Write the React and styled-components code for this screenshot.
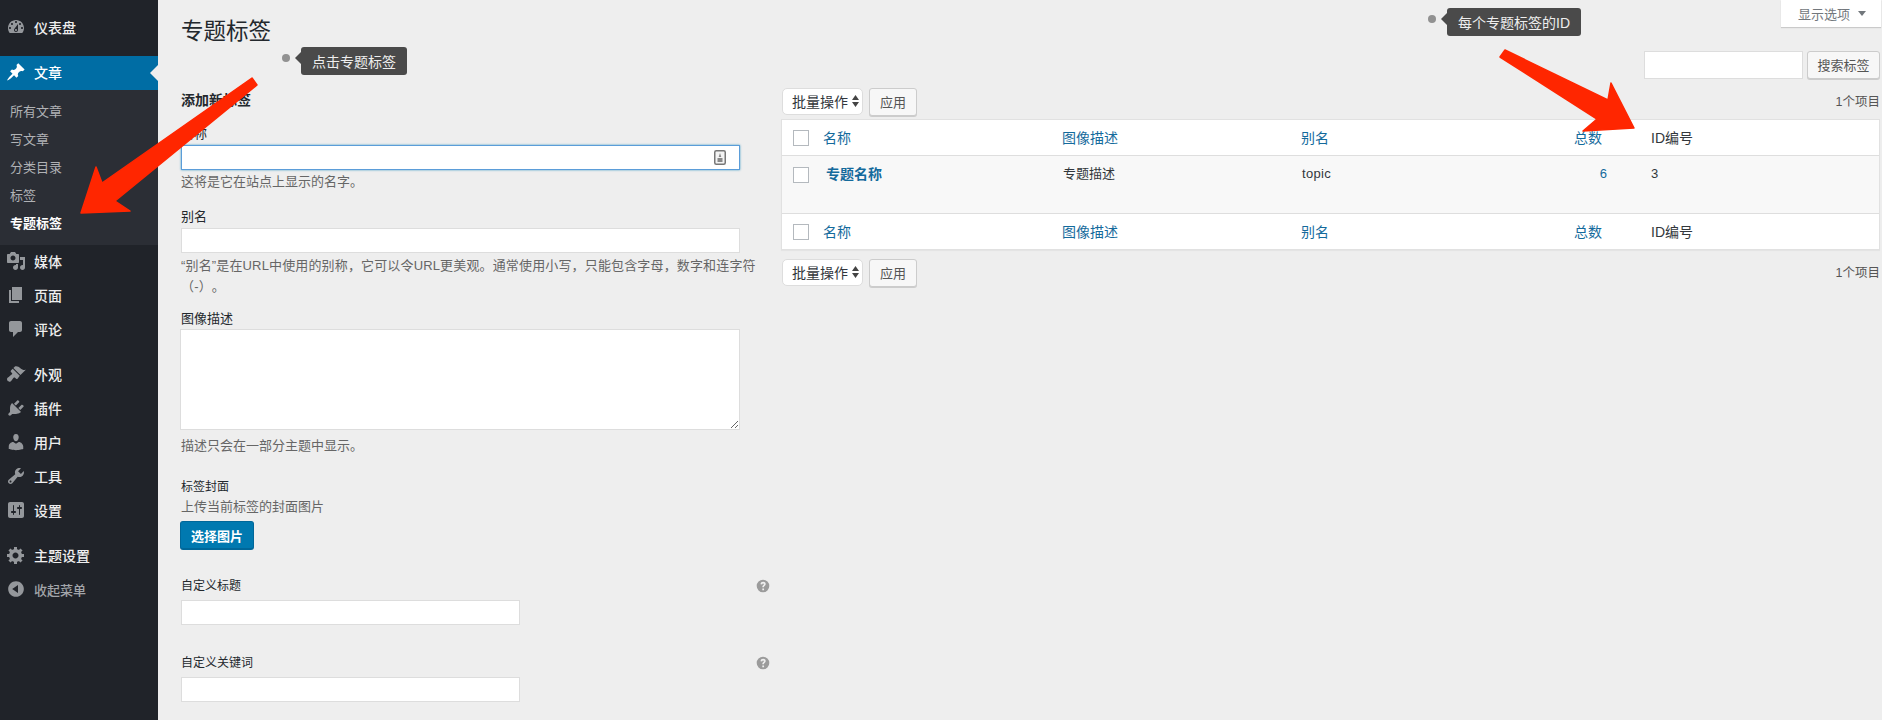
import styled, { createGlobalStyle } from 'styled-components';

const GlobalStyle = createGlobalStyle`
html, body {
  margin: 0;
  height: 720px;
  overflow: hidden;
  background: #eeeeee;
}
body {
  font-family: "Liberation Sans", "Noto Sans CJK SC", sans-serif;
  font-size: 13px;
  color: #32373c;
  text-spacing-trim: space-all;
}
`;

const icons = {
  dashboard: 'M3.76 16h12.48c1.1-1.37 1.76-3.11 1.76-5 0-4.42-3.58-8-8-8s-8 3.58-8 8c0 1.89.66 3.63 1.76 5zM10 4c.55 0 1 .45 1 1s-.45 1-1 1-1-.45-1-1 .45-1 1-1zM6 6c.55 0 1 .45 1 1s-.45 1-1 1-1-.45-1-1 .45-1 1-1zm8 0c.55 0 1 .45 1 1s-.45 1-1 1-1-.45-1-1 .45-1 1-1zm-5.37 5.55L12 7v6c0 1.1-.9 2-2 2s-2-.9-2-2c0-.57.24-1.08.63-1.45zM4 10c.55 0 1 .45 1 1s-.45 1-1 1-1-.45-1-1 .45-1 1-1zm12 0c.55 0 1 .45 1 1s-.45 1-1 1-1-.45-1-1 .45-1 1-1zm-5 3c0-.55-.45-1-1-1s-1 .45-1 1 .45 1 1 1 1-.45 1-1z',
  pin: 'M10.44 3.02l1.82-1.82 6.36 6.35-1.83 1.82c-1.05-.68-2.48-.57-3.41.36l-.75.75c-.92.93-1.04 2.35-.35 3.41l-1.83 1.82-2.41-2.41-2.8 2.79c-.42.42-3.38 2.71-3.8 2.29s1.86-3.39 2.28-3.81l2.79-2.79L4.1 9.36l1.83-1.82c1.05.69 2.48.57 3.4-.36l.75-.75c.93-.92 1.05-2.35.36-3.41z',
  media: 'M13 11V4c0-.55-.45-1-1-1h-1.67L9 1H5L3.67 3H2c-.55 0-1 .45-1 1v7c0 .55.45 1 1 1h10c.55 0 1-.45 1-1zM7 4.5c1.38 0 2.5 1.12 2.5 2.5S8.38 9.5 7 9.5 4.5 8.38 4.5 7 5.62 4.5 7 4.5zM14 6h5v10.5c0 1.38-1.12 2.5-2.5 2.5S14 17.88 14 16.5s1.12-2.5 2.5-2.5c.17 0 .34.02.5.05V9h-3V6zm-4 8.05V13h2v3.5c0 1.38-1.12 2.5-2.5 2.5S7 17.88 7 16.5 8.12 14 9.5 14c.17 0 .34.02.5.05z',
  page: 'M6 15V2h10v13H6zm-1 1h8v2H3V5h2v11z',
  comment: 'M5 2h9c1.1 0 2 .9 2 2v7c0 1.1-.9 2-2 2h-2l-5 5v-5H5c-1.1 0-2-.9-2-2V4c0-1.1.9-2 2-2z',
  brush: 'M14.48 11.06L7.41 3.99l1.5-1.5c.5-.56 2.3-.47 3.51.32 1.21.8 1.43 1.28 2.91 2.1 1.18.64 2.45 1.26 4.45.85zm-.71.71L6.7 4.7 4.93 6.47c-.39.39-.39 1.02 0 1.41l1.06 1.06c.39.39.39 1.03 0 1.42-.6.6-1.43 1.11-2.21 1.69-.35.26-.7.53-1.01.84C1.43 13.23.4 14.55 1.4 16.6c.8 1.6 2.6 1.4 3.7.3.31-.31.58-.66.84-1.01.58-.78 1.09-1.61 1.69-2.21.39-.39 1.03-.39 1.42 0l1.06 1.06c.39.39 1.02.39 1.41 0z',
  plugin: 'M13.11 4.36L9.87 7.6 8 5.73l3.24-3.24c.35-.34 1.05-.2 1.56.32.52.51.66 1.21.31 1.55zm-8 1.77l.91-1.12 9.01 9.01-1.19.84c-.71.71-2.63 1.16-3.82 1.16H6.14L4.9 17.26c-.59.59-1.54.59-2.12 0-.59-.58-.59-1.53 0-2.12l1.24-1.24v-3.88c0-1.13.4-3.19 1.09-3.89zm7.26 3.97l3.24-3.24c.34-.35 1.04-.21 1.55.31.52.51.66 1.21.31 1.55l-3.24 3.25z',
  user: 'M10 9.25c-2.27 0-2.73-3.44-2.73-3.44C7 4.02 7.82 2 9.97 2c2.16 0 2.98 2.02 2.71 3.81 0 0-.41 3.44-2.68 3.44zm0 2.57L12.72 10c2.39 0 4.52 2.33 4.52 4.53v2.49s-3.65 1.13-7.24 1.13c-3.65 0-7.24-1.13-7.24-1.13v-2.49c0-2.25 1.94-4.48 4.47-4.48z',
  tools: 'M16.68 9.77c-1.34 1.34-3.3 1.67-4.95.99l-5.41 6.52c-.99.99-2.59.99-3.58 0s-.99-2.59 0-3.57l6.52-5.42c-.68-1.65-.35-3.61.99-4.95 1.28-1.28 3.12-1.62 4.72-1.06l-2.89 2.89 2.82 2.82 2.86-2.87c.53 1.58.18 3.39-1.08 4.65zM3.81 16.21c.4.39 1.04.39 1.43 0 .4-.4.4-1.04 0-1.43-.39-.4-1.03-.4-1.43 0-.39.39-.39 1.03 0 1.43z',
  settings: 'M18 16V4c0-1.1-.9-2-2-2H4c-1.1 0-2 .9-2 2v12c0 1.1.9 2 2 2h12c1.1 0 2-.9 2-2zM8 11h1c.55 0 1 .45 1 1s-.45 1-1 1H8v1.5c0 .28-.22.5-.5.5s-.5-.22-.5-.5V13H6c-.55 0-1-.45-1-1s.45-1 1-1h1V5.5c0-.28.22-.5.5-.5s.5.22.5.5V11zm5-2h-1c-.55 0-1-.45-1-1s.45-1 1-1h1V5.5c0-.28.22-.5.5-.5s.5.22.5.5V7h1c.55 0 1 .45 1 1s-.45 1-1 1h-1v5.5c0 .28-.22.5-.5.5s-.5-.22-.5-.5V9z',
  gear: 'M18 12h-2.18c-.17.7-.44 1.35-.81 1.93l1.54 1.54-2.1 2.1-1.54-1.54c-.58.36-1.23.63-1.91.79V19H8v-2.18c-.68-.16-1.33-.43-1.91-.79l-1.54 1.54-2.12-2.12 1.54-1.54c-.36-.58-.63-1.23-.79-1.91H1V9.03h2.17c.16-.7.44-1.35.8-1.94L2.43 5.55l2.1-2.1 1.54 1.54c.58-.37 1.24-.64 1.93-.81V2h3v2.18c.68.16 1.33.43 1.91.79l1.54-1.54 2.12 2.12-1.54 1.54c.36.59.64 1.24.8 1.94H18V12zm-8.5 1.5c1.66 0 3-1.34 3-3s-1.34-3-3-3-3 1.34-3 3 1.34 3 3 3z',
  collapse: 'M10 2.16c4.33 0 7.84 3.51 7.84 7.84s-3.51 7.84-7.84 7.84S2.16 14.33 2.16 10 5.71 2.16 10 2.16zm2 11.72V6.12L6.18 9.97z',
};

const subItems = ['所有文章', '写文章', '分类目录', '标签', '专题标签'];

const Page = styled.div`
position: relative;
display: flex;
width: 1882px;
height: 720px;
overflow: hidden;
background: #eeeeee;
`;

const Sidebar = styled.nav`
flex: 0 0 158px;
background: #202329;
padding-top: 11px;
`;

const MenuGroup = styled.div`
margin-bottom: 11px;
`;

const MenuItem = styled.div`
position: relative;
display: flex;
align-items: center;
height: 34px;
box-sizing: border-box;
padding: 0 0 2px 6px;
gap: 8px;
font-size: ${(p) => p.$small ? '13px' : '14px'};
font-weight: 500;
color: ${(p) => p.$active ? '#ffffff' : p.$small ? '#a2a5a9' : '#eeeeee'};
background: ${(p) => p.$active ? '#006da4' : 'transparent'};

svg{
  flex: 0 0 20px;
  width: 20px;
  height: 20px;
  fill: ${(p) => p.$active ? '#ffffff' : '#94979b'};
}

${(p) => p.$active && `
&::after{
  content: "";
  position: absolute;
  right: 0;
  top: 9px;
  border: 8px solid transparent;
  border-right-color: #eeeeee;
  border-left-width: 0;
}
`}
`;

const SubMenu = styled.div`
background: #2b2e35;
padding: 7px 0 8px;
`;

const SubItem = styled.div`
display: flex;
align-items: center;
height: 28px;
box-sizing: border-box;
padding: 0 0 2px 10px;
font-size: 13px;
font-weight: ${(p) => p.$current ? 700 : 400};
color: ${(p) => p.$current ? '#ffffff' : '#b0b2b5'};
`;

const Content = styled.main`
flex: 1;
min-width: 0;
padding: 0 2px 0 23px;
`;

const Header = styled.header`
display: flex;
justify-content: space-between;
height: 88px;
`;

const Title = styled.h1`
margin: 0;
padding-top: 19px;
font-size: 22.5px;
line-height: 26px;
font-weight: 400;
color: #23282d;
`;

const HeaderRight = styled.div`
display: flex;
flex-direction: column;
align-items: flex-end;
`;

const ScreenTab = styled.div`
display: flex;
align-items: center;
width: 100px;
height: 27px;
box-sizing: border-box;
margin: 0 -1px 24px 0;
padding-left: 17px;
background: #ffffff;
box-shadow: 0 1px 1px rgba(0,0,0,0.15);
color: #72777c;
font-size: 13px;

&::after{
  content: "";
  margin-left: 8px;
  border: 4px solid transparent;
  border-top: 5px solid #72777c;
  border-bottom-width: 0;
}
`;

const SearchRow = styled.div`
display: flex;
gap: 4px;
`;

const SearchInput = styled.input`
width: 159px;
height: 28px;
box-sizing: border-box;
border: 1px solid #dddddd;
background: #ffffff;
`;

const Button = styled.button`
width: ${(p) => p.$width}px;
height: 28px;
box-sizing: border-box;
padding: 0 0 2px;
font: inherit;
font-size: 13px;
color: #555555;
background: #f7f7f7;
border: 1px solid #cccccc;
border-radius: 3px;
box-shadow: 0 1px 0 #cccccc;
`;

const Columns = styled.div`
display: flex;
`;

const LeftCol = styled.section`
flex: 0 0 590px;
display: flex;
flex-direction: column;
align-items: flex-start;
margin-right: 10px;
`;

const RightCol = styled.section`
flex: 1;
min-width: 0;
`;

const FormTitle = styled.h2`
margin: 0 0 12px;
font-size: 14px;
line-height: 24px;
font-weight: 700;
color: #23282d;
`;

const Label = styled.div`
font-size: ${(p) => p.$small ? '12px' : '13px'};
line-height: 20px;
margin-top: ${(p) => p.$top || 0}px;
color: #23282d;
`;

const LabelRow = styled.div`
display: flex;
justify-content: space-between;
align-items: center;
width: 100%;
margin-top: ${(p) => p.$top || 0}px;

svg{
  width: 14px;
  height: 14px;
  fill: #9b9b9b;
  margin-right: 1px;
}
`;

const InputWrap = styled.div`
position: relative;
margin-top: ${(p) => p.$top || 0}px;

svg{
  position: absolute;
  right: 14px;
  top: 5px;
  width: 12px;
  height: 15px;
}
`;

const TextInput = styled.input`
display: block;
width: ${(p) => p.$width || 559}px;
height: 25px;
box-sizing: border-box;
background: #ffffff;
border: 1px solid ${(p) => p.$focus ? '#5b9dd9' : '#dddddd'};
${(p) => p.$focus && 'box-shadow: 0 0 2px rgba(30,140,190,.8);'}
`;

const TextArea = styled.textarea`
display: block;
width: 560px;
height: 101px;
margin-left: -1px;
box-sizing: border-box;
background: #ffffff;
border: 1px solid #dddddd;
`;

const Hint = styled.p`
width: 578px;
margin: ${(p) => p.$top ?? 2}px 0 0;
font-size: 13px;
line-height: ${(p) => p.$line || 20}px;
letter-spacing: ${(p) => p.$spread ? '0.15px' : '0'};
color: #666666;
`;

const PrimaryButton = styled.button`
width: 74px;
height: 29px;
margin: 5px 0 0 -1px;
padding: 0;
font: inherit;
font-size: 13px;
font-weight: 700;
color: #ffffff;
background: #0079b0;
border: 1px solid #006799;
border-bottom-width: 2px;
border-radius: 3px;
`;

const TableNav = styled.div`
display: flex;
justify-content: space-between;
align-items: flex-start;
height: 31px;
margin-top: ${(p) => p.$top || 0}px;
`;

const NavLeft = styled.div`
display: flex;
gap: 6px;
margin-left: 1px;
`;

const BulkSelect = styled.div`
display: flex;
align-items: center;
justify-content: space-between;
width: 81px;
height: 27px;
box-sizing: border-box;
padding: 0 3px 2px 9px;
background: #ffffff;
border: 1px solid #dddddd;
border-radius: 5px;
font-size: 14px;
color: #32373c;
white-space: nowrap;

svg{
  width: 7px;
  height: 12px;
  fill: #444444;
}
`;

const ItemCount = styled.div`
font-size: 12.5px;
line-height: 28px;
color: #555555;
`;

const Table = styled.div`
border: 1px solid #e1e1e1;
background: #ffffff;
box-shadow: 0 1px 1px rgba(0,0,0,0.04);
`;

const Row = styled.div`
display: grid;
grid-template-columns: 41px 239px 239px 175px 175px 1fr;
height: ${(p) => p.$height}px;
box-sizing: border-box;
align-items: ${(p) => p.$body ? 'start' : 'center'};
background: ${(p) => p.$body ? '#f8f8f8' : '#ffffff'};
${(p) => p.$line && 'border-bottom: 1px solid #dedede;'}
`;

const CheckCell = styled.div`
padding-left: 11px;
padding-top: ${(p) => p.$top || 0}px;
`;

const Check = styled.span`
display: block;
width: 16px;
height: 16px;
box-sizing: border-box;
background: #ffffff;
border: 1px solid #b4b9be;
`;

const Head = styled.div`
font-size: 14px;
line-height: 20px;
color: ${(p) => p.$plain ? '#32373c' : '#146a9c'};
text-align: ${(p) => p.$right ? 'right' : 'left'};
${(p) => p.$right && 'padding-right: 49px;'}
`;

const Cell = styled.div`
padding-top: 8px;
padding-left: ${(p) => p.$left || 0}px;
font-size: ${(p) => p.$strong ? '14px' : '13px'};
line-height: 20px;
font-weight: ${(p) => p.$strong ? 700 : 400};
color: ${(p) => p.$link ? '#146a9c' : '#32373c'};
letter-spacing: ${(p) => p.$latin ? '0.3px' : '0'};
text-align: ${(p) => p.$right ? 'right' : 'left'};
${(p) => p.$right && 'padding-right: 44px;'}
`;

const Tooltip = styled.div`
position: absolute;
left: ${(p) => p.$x}px;
top: ${(p) => p.$y}px;
height: 28px;
padding: 0 11px;
display: flex;
align-items: center;
background: #4a4a4a;
border-radius: 3px;
color: #eeeeee;
font-size: 14px;
white-space: nowrap;

&::before{
  content: "";
  position: absolute;
  left: -19px;
  top: 7px;
  width: 8px;
  height: 8px;
  border-radius: 50%;
  background: #919191;
}

&::after{
  content: "";
  position: absolute;
  left: -6px;
  top: 5px;
  border: 6px solid transparent;
  border-right-color: #4a4a4a;
  border-left-width: 0;
}
`;

const Overlay = styled.svg`
position: absolute;
left: 0;
top: 0;
width: 1882px;
height: 720px;
pointer-events: none;

polygon{
  fill: #ff2600;
  stroke: #ff2600;
  stroke-width: 1.5px;
  stroke-linejoin: round;
}
`;

function MenuIcon({ name }){
  return <svg viewBox="0 0 20 20"><path d={icons[name]} /></svg>;
}

function HelpIcon(){
  return (
    <svg viewBox="0 0 20 20">
      <path fillRule="evenodd" d="M10 1a9 9 0 1 1 0 18 9 9 0 0 1 0-18zM9 13.5V16h2.5v-2.5H9zM6.5 7.5l2.3.4c.2-1 .6-1.5 1.3-1.5s1.1.4 1.1 1c0 .5-.3.9-1 1.5-1 .9-1.3 1.5-1.2 3h2.3c0-.9.2-1.2 1-1.9 1-.8 1.6-1.6 1.6-2.8 0-1.9-1.5-3.1-3.7-3.1-2.3 0-3.6 1.2-3.7 3.4z" />
    </svg>
  );
}

function SortArrows(){
  return (
    <svg viewBox="0 0 7 12"><path d="M3.5 0L7 5H0zM3.5 12L0 7h7z" /></svg>
  );
}

function TableHead({ line, height }){
  return (
    <Row $height={height} $line={line}>
      <CheckCell><Check /></CheckCell>
      <Head>名称</Head>
      <Head>图像描述</Head>
      <Head>别名</Head>
      <Head $right>总数</Head>
      <Head $plain>ID编号</Head>
    </Row>
  );
}

function Nav({ top }){
  return (
    <TableNav $top={top}>
      <NavLeft>
        <BulkSelect>批量操作<SortArrows /></BulkSelect>
        <Button $width={48}>应用</Button>
      </NavLeft>
      <ItemCount>1个项目</ItemCount>
    </TableNav>
  );
}

export default function App(){
  return (
    <Page>
      <GlobalStyle />
      <Sidebar>
        <MenuGroup>
          <MenuItem><MenuIcon name="dashboard" />仪表盘</MenuItem>
        </MenuGroup>
        <MenuGroup>
          <MenuItem $active><MenuIcon name="pin" />文章</MenuItem>
          <SubMenu>
            {subItems.map((item, index) => (
              <SubItem key={item} $current={index === subItems.length - 1}>{item}</SubItem>
            ))}
          </SubMenu>
          <MenuItem><MenuIcon name="media" />媒体</MenuItem>
          <MenuItem><MenuIcon name="page" />页面</MenuItem>
          <MenuItem><MenuIcon name="comment" />评论</MenuItem>
        </MenuGroup>
        <MenuGroup>
          <MenuItem><MenuIcon name="brush" />外观</MenuItem>
          <MenuItem><MenuIcon name="plugin" />插件</MenuItem>
          <MenuItem><MenuIcon name="user" />用户</MenuItem>
          <MenuItem><MenuIcon name="tools" />工具</MenuItem>
          <MenuItem><MenuIcon name="settings" />设置</MenuItem>
        </MenuGroup>
        <MenuItem><MenuIcon name="gear" />主题设置</MenuItem>
        <MenuItem $small><MenuIcon name="collapse" />收起菜单</MenuItem>
      </Sidebar>

      <Content>
        <Header>
          <Title>专题标签</Title>
          <HeaderRight>
            <ScreenTab>显示选项</ScreenTab>
            <SearchRow>
              <SearchInput />
              <Button $width={73}>搜索标签</Button>
            </SearchRow>
          </HeaderRight>
        </Header>

        <Columns>
          <LeftCol>
            <FormTitle>添加新标签</FormTitle>
            <Label>名称</Label>
            <InputWrap $top={1}>
              <TextInput $focus />
              <svg viewBox="0 0 12 15">
                <rect x="0.75" y="0.75" width="10.5" height="13.5" rx="1.5" fill="#f4f4f4" stroke="#777777" strokeWidth="1.5" />
                <path d="M6 3l1.3 4H4.7zM3.5 8h5v4h-5z" fill="#888888" />
              </svg>
            </InputWrap>
            <Hint>这将是它在站点上显示的名字。</Hint>

            <Label $top={15}>别名</Label>
            <InputWrap $top={1}><TextInput /></InputWrap>
            <Hint $line={21} $spread>“别名”是在URL中使用的别称，它可以令URL更美观。通常使用小写，只能包含字母，数字和连字符（-）。</Hint>

            <Label $top={12}>图像描述</Label>
            <TextArea />
            <Hint $top={6}>描述只会在一部分主题中显示。</Hint>

            <Label $small $top={21}>标签封面</Label>
            <Hint $top={0} $line={19}>上传当前标签的封面图片</Hint>
            <PrimaryButton>选择图片</PrimaryButton>

            <LabelRow $top={26}>
              <Label $small>自定义标题</Label>
              <HelpIcon />
            </LabelRow>
            <InputWrap $top={4}><TextInput $width={339} /></InputWrap>

            <LabelRow $top={28}>
              <Label $small>自定义关键词</Label>
              <HelpIcon />
            </LabelRow>
            <InputWrap $top={4}><TextInput $width={339} /></InputWrap>
          </LeftCol>

          <RightCol>
            <Nav />
            <Table>
              <TableHead height={36} line />
              <Row $height={58} $body $line>
                <CheckCell $top={11}><Check /></CheckCell>
                <Cell $left={3} $strong $link>专题名称</Cell>
                <Cell $left={1}>专题描述</Cell>
                <Cell $left={1} $latin>topic</Cell>
                <Cell $right $link>6</Cell>
                <Cell>3</Cell>
              </Row>
              <TableHead height={35} />
            </Table>
            <Nav top={9} />
          </RightCol>
        </Columns>
      </Content>

      <Tooltip $x={301} $y={47}>点击专题标签</Tooltip>
      <Tooltip $x={1447} $y={8}>每个专题标签的ID</Tooltip>

      <Overlay viewBox="0 0 1882 720">
        <polygon points="81,213 96,167 102,183 252,78 257,85 115,201 130,211" />
        <polygon points="1634,128 1611,83 1608,100 1505,50 1500,57 1597,119 1583,131" />
      </Overlay>
    </Page>
  );
}
